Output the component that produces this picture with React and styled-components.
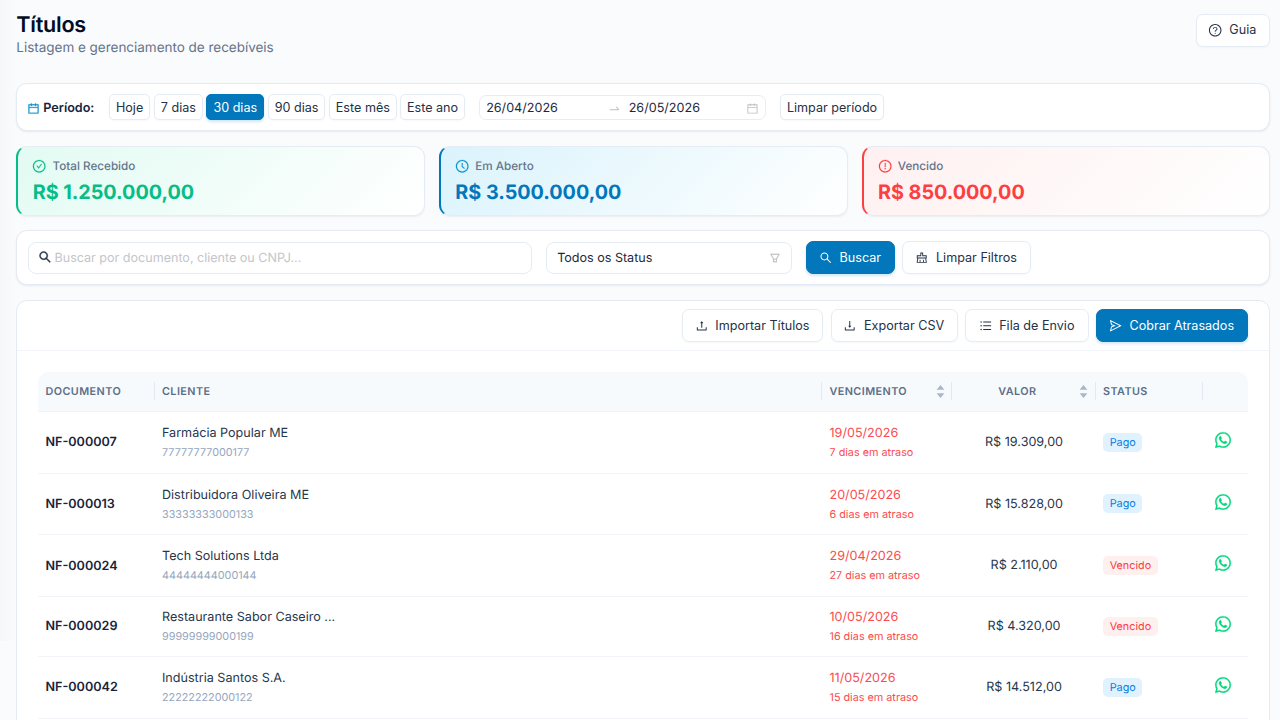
import React from "react";
import styled, { createGlobalStyle, css } from "styled-components";
import {
  AiOutlineCalendar,
  AiOutlineCheckCircle,
  AiOutlineClockCircle,
  AiOutlineExclamationCircle,
  AiOutlineSearch,
  AiOutlineFilter,
  AiOutlineClear,
  AiOutlineUpload,
  AiOutlineDownload,
  AiOutlineUnorderedList,
  AiOutlineSend,
  AiOutlineQuestionCircle,
  AiOutlineSwapRight,
  AiFillCaretUp,
  AiFillCaretDown,
} from "react-icons/ai";
import { FaWhatsapp } from "react-icons/fa";

const GlobalStyle = createGlobalStyle`
  * { box-sizing: border-box; }
  body {
    margin: 0;
    background: #fafbfd;
    overflow: hidden;
    font-family: Inter, "Liberation Sans", sans-serif;
    font-size: 12.6px;
    color: #1e293b;
    text-rendering: geometricPrecision;
  }
`;

const Screen = styled.div`
  display: flex;
  height: 720px;
  overflow: hidden;
`;

const SideShade = styled.div`
  flex: 0 0 16.3px;
  height: 641px;
  background: linear-gradient(90deg, #f5f7fa, #fafbfd);
`;

const Page = styled.main`
  flex: 0 0 1254px;
  display: flex;
  flex-direction: column;
`;

const Header = styled.header`
  flex: none;
  display: flex;
  justify-content: space-between;
  height: 83.4px;
  padding-top: 11.6px;
`;

const Title = styled.h1`
  margin: 0;
  font-size: 21.6px;
  line-height: 27px;
  font-weight: 600;
  letter-spacing: -0.25px;
  color: #020c24;
`;

const Subtitle = styled.p`
  margin: 0;
  font-size: 13.5px;
  line-height: 19.4px;
  letter-spacing: -0.02px;
  color: #64748b;
`;

const Card = styled.section`
  flex: none;
  display: flex;
  align-items: center;
  height: ${(p) => p.$height}px;
  padding: 0 10.4px;
  margin-bottom: ${(p) => p.$gap}px;
  background: #fff;
  border: 1px solid #e5ebf3;
  border-radius: 11px;
  box-shadow: 0 1px 2px rgba(30, 50, 90, 0.09);
`;

const Button = styled.button`
  flex: none;
  display: flex;
  align-items: center;
  justify-content: center;
  gap: 7.2px;
  width: ${(p) => p.$width}px;
  height: ${(p) => (p.$small ? 26 : 33)}px;
  padding: 1px ${(p) => (p.$small ? 0 : 1)}px 0 0;
  font: 400 12.6px/20px Inter, "Liberation Sans", sans-serif;
  white-space: nowrap;
  color: #243247;
  background: #fff;
  border: 1px solid #e6ecf4;
  border-radius: ${(p) => (p.$small ? 5 : 7)}px;
  box-shadow: 0 1px 2px rgba(15, 40, 80, 0.03);
  svg { font-size: 13.5px; }
  ${(p) =>
    p.$primary &&
    css`
      color: #fff;
      background: #0277bb;
      border-color: #0277bb;
      box-shadow: 0 2px 3px rgba(2, 119, 187, 0.18);
    `}
`;

const GuideButton = styled(Button)`
  margin-top: 2px;
  padding: 0 2px 0 0;
  svg { font-size: 14.4px; }
`;

const PeriodLabel = styled.div`
  display: flex;
  align-items: center;
  gap: 3.6px;
  width: 82px;
  margin-left: -1px;
  padding-top: 1.6px;
  font-weight: 600;
  color: #17233a;
  svg {
    color: #0a92cd;
    font-size: 13px;
    stroke: #0a92cd;
    stroke-width: 20;
  }
`;

const Presets = styled.div`
  display: flex;
  gap: 3.6px;
`;

const RangePicker = styled.div`
  display: flex;
  align-items: center;
  width: 286.5px;
  height: 25px;
  margin: 0 14.4px;
  padding: 1.6px 6px 0;
  border: 1px solid #e8edf5;
  border-radius: 7px;
  color: #1e293b;
  svg { color: #bfbfbf; font-size: 13px; }
`;

const RangeDate = styled.span`
  width: ${(p) => p.$width}px;
`;

const ArrowSlot = styled.span`
  display: flex;
  width: 21px;
`;

const Stats = styled.div`
  flex: none;
  display: grid;
  grid-template-columns: repeat(3, 1fr);
  gap: 14px;
  height: 70.4px;
  margin-bottom: 14px;
`;

const Stat = styled.div`
  display: flex;
  flex-direction: column;
  padding: 10.4px 14px 0;
  background: linear-gradient(135deg, ${(p) => p.$tint} 0%, #ffffff 100%);
  border: 1px solid #e6ecf4;
  border-left: 2px solid ${(p) => p.$accent};
  border-radius: 11px;
  box-shadow: 0 1px 2px rgba(30, 50, 90, 0.07);
`;

const StatLabel = styled.div`
  display: flex;
  align-items: center;
  gap: 5.8px;
  font-size: 11.7px;
  line-height: 19px;
  font-weight: 500;
  color: #64748b;
  svg {
    font-size: 14.4px;
    color: ${(p) => p.$color};
    stroke-width: 12;
  }
`;

const StatValue = styled.div`
  padding-left: 0.4px;
  font-size: 19.8px;
  line-height: 32.4px;
  letter-spacing: -0.03px;
  font-weight: 700;
  color: ${(p) => p.$color};
`;

const Field = styled.div`
  display: flex;
  align-items: center;
  justify-content: ${(p) => (p.$spread ? "space-between" : "flex-start")};
  gap: 2.8px;
  width: ${(p) => p.$width}px;
  height: 32px;
  margin: 1px 14px 0 0;
  padding: 1px 10px 0;
  border: 1px solid #e6ecf4;
  border-radius: 8px;
  letter-spacing: -0.02px;
  color: ${(p) => (p.$placeholder ? "#c4c6ca" : "#1e293b")};
`;

const LensIcon = styled(AiOutlineSearch)`
  margin: -2px 0 0 -1px;
  color: #243247;
  font-size: 14px;
  stroke-width: 32;
`;

const FunnelIcon = styled(AiOutlineFilter)`
  margin-top: -1px;
  color: #bfbfbf;
  font-size: 12px;
  stroke-width: 16;
`;

const FilterActions = styled.div`
  display: flex;
  gap: 7.2px;
`;

const TableCard = styled.section`
  flex: none;
  height: 460px;
  background: #fff;
  border: 1px solid #e5ebf3;
  border-radius: 11px;
`;

const Toolbar = styled.div`
  display: flex;
  align-items: center;
  justify-content: flex-end;
  gap: 7.2px;
  height: 50px;
  padding-right: 21.4px;
  border-bottom: 1px solid #f2f5f9;
`;

const Table = styled.div`
  margin: 21.1px 21.4px 0 21px;
`;

const columns = css`
  display: grid;
  grid-template-columns: 116.5px 667.5px 130px 143.5px 107.5px 1fr;
`;

const HeadRow = styled.div`
  ${columns}
  align-items: center;
  height: 40px;
  background: #f7fafd;
  border-bottom: 1px solid #f0f4f9;
  border-radius: 11px 11px 0 0;
  font-size: 10.8px;
  font-weight: 600;
  letter-spacing: 0.43px;
  color: #5b6f88;
`;

const HeadCell = styled.div`
  display: flex;
  align-items: center;
  height: 18px;
  padding: 0 5.5px 0 7.2px;
  border-right: ${(p) => (p.$last ? "none" : "1.5px solid #e3e9f1")};
`;

const HeadText = styled.span`
  flex: 1;
  text-align: ${(p) => (p.$center ? "center" : "left")};
  padding-right: ${(p) => (p.$center ? 3 : 0)}px;
`;

const Sorter = styled.span`
  display: flex;
  flex-direction: column;
  color: #a9b7ca;
  svg { display: block; font-size: 11px; }
  svg + svg { margin-top: -3px; }
`;

const Row = styled.div`
  ${columns}
  align-items: center;
  height: ${(p) => p.$height}px;
  border-bottom: 1px solid #f1f5f9;
`;

const Cell = styled.div`
  padding: ${(p) => p.$drop || 0}px 7.2px 0;
  text-align: ${(p) => (p.$center ? "center" : "left")};
`;

const DocNumber = styled.div`
  font-weight: 600;
  color: #17233a;
`;

const MainLine = styled.div`
  line-height: 20px;
  color: ${(p) => (p.$late ? "#fb4b4e" : "#27364b")};
`;

const SubLine = styled.div`
  font-size: 10.8px;
  line-height: 18.4px;
  color: ${(p) => (p.$late ? "#fb4b4e" : "#94a6bd")};
`;

const Tag = styled.span`
  display: inline-block;
  padding: 0 6.7px;
  font-size: 10.8px;
  line-height: 19px;
  border-radius: 5px;
  color: ${(p) => (p.$paid ? "#0a7de0" : "#fb3b43")};
  background: ${(p) => (p.$paid ? "#e0f2fe" : "#fff0f0")};
`;

const WhatsApp = styled(FaWhatsapp)`
  display: block;
  margin: 0 auto 4.4px 10.5px;
  color: #04d67c;
  font-size: 18px;
  stroke-width: 8;
`;

const stats = [
  { label: "Total Recebido", value: "R$ 1.250.000,00", color: "#05bd87", tint: "#e2fbf3", Icon: AiOutlineCheckCircle },
  { label: "Em Aberto", value: "R$ 3.500.000,00", color: "#0277bb", icon: "#0a92cd", tint: "#daf3fc", Icon: AiOutlineClockCircle },
  { label: "Vencido", value: "R$ 850.000,00", color: "#fc3f42", tint: "#fff0f0", Icon: AiOutlineExclamationCircle },
];

const presets = [
  ["Hoje", 41.8],
  ["7 dias", 48.6],
  ["30 dias", 58],
  ["90 dias", 57.5],
  ["Este mês", 67.8],
  ["Este ano", 64.4],
];

const rows = [
  ["NF-000007", "Farmácia Popular ME", "77777777000177", "19/05/2026", "7 dias em atraso", "R$ 19.309,00", "Pago", 61.8],
  ["NF-000013", "Distribuidora Oliveira ME", "33333333000133", "20/05/2026", "6 dias em atraso", "R$ 15.828,00", "Pago", 61.7],
  ["NF-000024", "Tech Solutions Ltda", "44444444000144", "29/04/2026", "27 dias em atraso", "R$ 2.110,00", "Vencido", 61.6],
  ["NF-000029", "Restaurante Sabor Caseiro ...", "99999999000199", "10/05/2026", "16 dias em atraso", "R$ 4.320,00", "Vencido", 60.2],
  ["NF-000042", "Indústria Santos S.A.", "22222222000122", "11/05/2026", "15 dias em atraso", "R$ 14.512,00", "Pago", 61.6],
];

const SortArrows = () => (
  <Sorter>
    <AiFillCaretUp />
    <AiFillCaretDown />
  </Sorter>
);

export default function App() {
  return (
    <>
      <GlobalStyle />
      <Screen>
        <SideShade />
        <Page>
          <Header>
            <div>
              <Title>Títulos</Title>
              <Subtitle>Listagem e gerenciamento de recebíveis</Subtitle>
            </div>
            <GuideButton $width={74.5}>
              <AiOutlineQuestionCircle />
              Guia
            </GuideButton>
          </Header>

          <Card $height={48} $gap={14.2}>
            <PeriodLabel>
              <AiOutlineCalendar />
              Período:
            </PeriodLabel>
            <Presets>
              {presets.map(([label, width]) => (
                <Button key={label} $small $width={width} $primary={label === "30 dias"}>
                  {label}
                </Button>
              ))}
            </Presets>
            <RangePicker>
              <RangeDate $width={122}>26/04/2026</RangeDate>
              <ArrowSlot>
                <AiOutlineSwapRight />
              </ArrowSlot>
              <RangeDate $width={117.4}>26/05/2026</RangeDate>
              <AiOutlineCalendar />
            </RangePicker>
            <Button $small $width={104}>Limpar período</Button>
          </Card>

          <Stats>
            {stats.map(({ label, value, color, icon, tint, Icon }) => (
              <Stat key={label} $tint={tint} $accent={color}>
                <StatLabel $color={icon || color}>
                  <Icon />
                  {label}
                </StatLabel>
                <StatValue $color={color}>{value}</StatValue>
              </Stat>
            ))}
          </Stats>

          <Card $height={55} $gap={14.7}>
            <Field $width={504.5} $placeholder>
              <LensIcon />
              Buscar por documento, cliente ou CNPJ...
            </Field>
            <Field $width={245.5} $spread>
              Todos os Status
              <FunnelIcon />
            </Field>
            <FilterActions>
              <Button $primary $width={89.5}>
                <AiOutlineSearch />
                Buscar
              </Button>
              <Button $width={128.5}>
                <AiOutlineClear />
                Limpar Filtros
              </Button>
            </FilterActions>
          </Card>

          <TableCard>
            <Toolbar>
              <Button $width={141.6}>
                <AiOutlineUpload />
                Importar Títulos
              </Button>
              <Button $width={127.5}>
                <AiOutlineDownload />
                Exportar CSV
              </Button>
              <Button $width={123.5}>
                <AiOutlineUnorderedList />
                Fila de Envio
              </Button>
              <Button $primary $width={152}>
                <AiOutlineSend />
                Cobrar Atrasados
              </Button>
            </Toolbar>
            <Table>
              <HeadRow>
                <HeadCell>DOCUMENTO</HeadCell>
                <HeadCell>CLIENTE</HeadCell>
                <HeadCell>
                  <HeadText>VENCIMENTO</HeadText>
                  <SortArrows />
                </HeadCell>
                <HeadCell>
                  <HeadText $center>VALOR</HeadText>
                  <SortArrows />
                </HeadCell>
                <HeadCell>STATUS</HeadCell>
                <HeadCell $last />
              </HeadRow>
              {rows.map(([doc, client, taxId, due, late, amount, status, height]) => (
                <Row key={doc} $height={height}>
                  <Cell $drop={1}>
                    <DocNumber>{doc}</DocNumber>
                  </Cell>
                  <Cell $drop={2}>
                    <MainLine>{client}</MainLine>
                    <SubLine>{taxId}</SubLine>
                  </Cell>
                  <Cell $drop={2}>
                    <MainLine $late>{due}</MainLine>
                    <SubLine $late>{late}</SubLine>
                  </Cell>
                  <Cell $center $drop={1.6}>
                    <MainLine>{amount}</MainLine>
                  </Cell>
                  <Cell>
                    <Tag $paid={status === "Pago"}>{status}</Tag>
                  </Cell>
                  <WhatsApp />
                </Row>
              ))}
            </Table>
          </TableCard>
        </Page>
      </Screen>
    </>
  );
}
